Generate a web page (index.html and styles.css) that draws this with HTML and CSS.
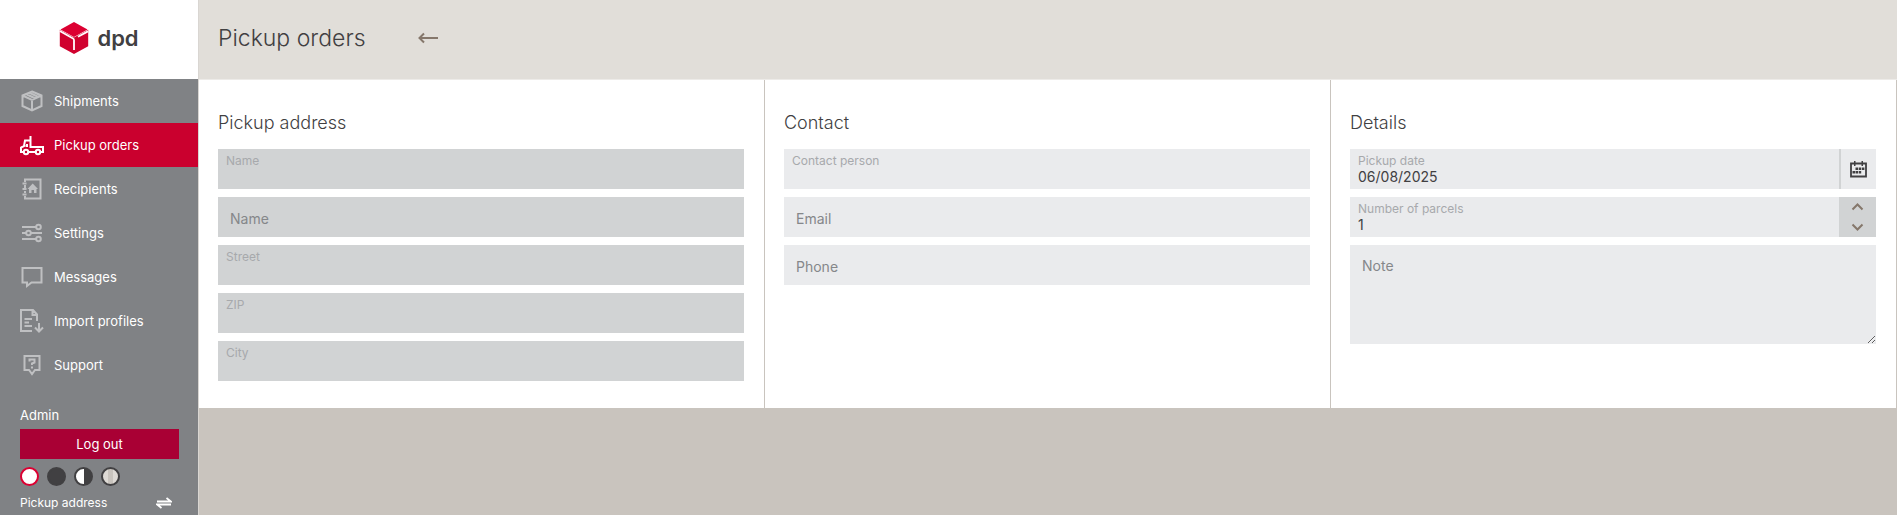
FILE: index.html
```
<!DOCTYPE html>
<html lang="en">
<head>
  <meta charset="UTF-8">
  <meta name="viewport" content="width=device-width, initial-scale=1.0">
  <title>Pickup orders</title>
  <link rel="stylesheet" href="styles.css">
</head>
<body>
  <div class="app">
    <!-- Sidebar -->
    <aside class="sidebar">
      <a href="#" class="logo" aria-label="dpd">
        <svg width="30" height="34" viewBox="0 0 30 34" aria-hidden="true">
          <path d="M15 1 28.500 8.500 15 16 1.500 8.500Z" fill="#dc0032"/>
          <path d="M.8 8.800 15 16.500 29.200 8.800V25.300L15 33 .8 25.300Z" fill="#d0022f"/>
          <path d="M.8 10 14 17.500Q15 18 15 19.200V29M29 10.400 19 15.800" fill="none" stroke="#fff" stroke-width="1.8"/>
        </svg>
        <span class="logo-text">dpd</span>
      </a>

      <nav class="menu" aria-label="Main menu">
        <a href="#" class="menu-item">
          <svg class="menu-icon" viewBox="0 0 24 24" aria-hidden="true"><path d="M12 2.500 21.500 6.500V17L12 21.500 2.500 17V6.500ZM2.500 6.500 12 11l9.500-4.500M12 11v10.500M6 5l9.500 4.500M9 3.700l9.500 4.300"/></svg>
          Shipments
        </a>
        <a href="#" class="menu-item active" aria-current="page">
          <svg class="menu-icon" viewBox="0 0 24 24" aria-hidden="true"><path d="M3.500 19H1V14.500L4 13l1-5.500H10M10.500 3V14H23V19H21M8.500 19H15.500M5.500 13H7V11"/><circle cx="6" cy="19" r="2.200"/><circle cx="18" cy="19" r="2.200"/></svg>
          Pickup orders
        </a>
        <a href="#" class="menu-item">
          <svg class="menu-icon" viewBox="0 0 24 24" aria-hidden="true"><path d="M5 5V2.500H20.500V21.500H5V19M5 8v3M5 14v2M2.500 6.500H6.500M2.500 12H6.500M2.500 17.500H6.500"/><path class="solid" d="M12.700 6.500 18 12h-1.500v4H14v-3h-2.500v3H9v-4H7.500Z"/></svg>
          Recipients
        </a>
        <a href="#" class="menu-item">
          <svg class="menu-icon" viewBox="0 0 24 24" aria-hidden="true"><path d="M2 6h14M2 12h4M11 12h11M2 18h14"/><circle cx="18.500" cy="6" r="2.300"/><circle cx="8.500" cy="12" r="2.300"/><circle cx="18.500" cy="18" r="2.300"/></svg>
          Settings
        </a>
        <a href="#" class="menu-item">
          <svg class="menu-icon" viewBox="0 0 24 24" aria-hidden="true"><path d="M2.500 3h19v14.500H11.500L7 21v-3.500H2.500Z"/></svg>
          Messages
        </a>
        <a href="#" class="menu-item">
          <svg class="menu-icon" viewBox="0 0 24 24" aria-hidden="true"><path d="M12 22H1V1h12l4 4.500V12M12.500 1v5H17M4.500 10H12M4.500 13.500H9M4.500 17H12M19 14v8M15 18.500l4 4 4-4"/></svg>
          Import profiles
        </a>
        <a href="#" class="menu-item">
          <svg class="menu-icon" viewBox="0 0 24 24" aria-hidden="true"><path d="M4.500 3h15v14H15l-3 4-3-4H4.500ZM9.500 8.500V6.500h5v3L12 10.500v1.500M12 13.500v2"/></svg>
          Support
        </a>
      </nav>

      <div class="account">
        <div class="user-name">Admin</div>
        <button type="button" class="logout">Log out</button>
        <div class="themes" role="group" aria-label="Theme">
          <button type="button" class="theme light" aria-label="Light"></button>
          <button type="button" class="theme dark" aria-label="Dark"></button>
          <button type="button" class="theme contrast" aria-label="High contrast"></button>
          <button type="button" class="theme sand" aria-label="Sand"></button>
        </div>
        <a href="#" class="address-switch">
          Pickup address
          <svg width="16" height="12" viewBox="0 0 16 12" aria-hidden="true"><path d="M1 4.500H15L10.500 1M15 7.500H1L5.500 11"/></svg>
        </a>
      </div>
    </aside>

    <!-- Content -->
    <main class="content">
      <header class="page-header">
        <h1>Pickup orders</h1>
        <a href="#" class="back" aria-label="Back">
          <svg width="20" height="12" viewBox="0 0 20 12" aria-hidden="true"><path d="M20 6H1.500M6 1.500 1.500 6 6 10.500"/></svg>
        </a>
      </header>

      <form class="panels">
        <section class="panel">
          <h2>Pickup address</h2>
          <div class="field disabled">
            <label for="name">Name</label>
            <input type="text" id="name" disabled>
          </div>
          <div class="field disabled plain">
            <input type="text" placeholder="Name" aria-label="Name" disabled>
          </div>
          <div class="field disabled">
            <label for="street">Street</label>
            <input type="text" id="street" disabled>
          </div>
          <div class="field disabled">
            <label for="zip">ZIP</label>
            <input type="text" id="zip" disabled>
          </div>
          <div class="field disabled">
            <label for="city">City</label>
            <input type="text" id="city" disabled>
          </div>
        </section>

        <section class="panel">
          <h2>Contact</h2>
          <div class="field">
            <label for="person">Contact person</label>
            <input type="text" id="person">
          </div>
          <div class="field plain">
            <input type="email" placeholder="Email" aria-label="Email">
          </div>
          <div class="field plain">
            <input type="tel" placeholder="Phone" aria-label="Phone">
          </div>
        </section>

        <section class="panel">
          <h2>Details</h2>
          <div class="field-row">
            <div class="field">
              <label for="date">Pickup date</label>
              <input type="text" id="date" value="06/08/2025">
            </div>
            <button type="button" class="calendar" aria-label="Choose date">
              <svg width="17" height="17" viewBox="0 0 17 17" aria-hidden="true"><path d="M1 2.500H16V15.500H1Z" fill="none" stroke="#414042" stroke-width="1.8"/><path d="M4 0h1.500v5H4ZM11.500 0H13v5h-1.500ZM5.500 6.500h2.500v2.500H5.500ZM8.700 6.500h2.500v2.500H8.700ZM11.900 6.500h2.500v2.500h-2.500ZM2.500 10H5v2.500H2.500ZM5.500 10h2.500v2.500H5.500ZM8.700 10h2.500v2.500H8.700Z" fill="#414042"/></svg>
            </button>
          </div>
          <div class="field-row">
            <div class="field">
              <label for="parcels">Number of parcels</label>
              <input type="text" id="parcels" inputmode="numeric" value="1">
            </div>
            <div class="stepper">
              <button type="button" aria-label="More">
                <svg width="13" height="8" viewBox="0 0 13 8" aria-hidden="true"><path d="M1.500 6.500l5-5 5 5"/></svg>
              </button>
              <button type="button" aria-label="Fewer">
                <svg width="13" height="8" viewBox="0 0 13 8" aria-hidden="true"><path d="M1.500 1.500l5 5 5-5"/></svg>
              </button>
            </div>
          </div>
          <textarea class="note" placeholder="Note" aria-label="Note"></textarea>
        </section>
      </form>
    </main>
  </div>
</body>
</html>
```
FILE: styles.css
```
/* Basic Reset */
* {
  margin: 0;
  padding: 0;
  box-sizing: border-box;
}

body {
  background-color: #fff;
  color: #414042;
  font-family: Inter, "Open Sans", sans-serif;
  font-size: 13px;
  line-height: 16px;
}

a {
  color: inherit;
  text-decoration: none;
}

button,
input,
textarea {
  border: none;
  color: inherit;
  font: inherit;
}

svg {
  display: block;
  flex: none;
}

.app {
  display: grid;
  grid-template-columns: 198px 1fr;
  min-height: calc(100vh - 1px);
  background-color: #c9c4be;
}

/* Sidebar */
.sidebar {
  display: flex;
  flex-direction: column;
  background-color: #808285;
  color: #fff;
}

.logo {
  display: flex;
  align-items: center;
  justify-content: center;
  gap: 8px;
  height: 79px;
  padding-bottom: 3px;
  background-color: #fff;
}

.logo-text {
  color: #414042;
  font-size: 22px;
  font-weight: 600;
  line-height: 28px;
}

.menu-item {
  display: flex;
  align-items: center;
  gap: 10px;
  height: 44px;
  padding-left: 20px;
}

.menu-item.active {
  background-color: #ca002e;
}

.menu-icon {
  width: 24px;
  height: 24px;
  overflow: visible;
  fill: none;
  stroke: #bfc0c2;
  stroke-width: 2;
}

.menu-icon .solid {
  fill: #bfc0c2;
  stroke: none;
}

.active .menu-icon {
  stroke: #fff;
}

.account {
  padding: 20px 19px 4px 20px;
}

.user-name {
  margin-bottom: 6px;
}

.logout {
  display: block;
  width: 100%;
  height: 30px;
  background-color: #a90034;
  cursor: pointer;
}

.themes {
  display: flex;
  gap: 8px;
  margin: 8px 0 9px;
}

.theme {
  width: 19px;
  height: 19px;
  border: 2px solid #414042;
  border-radius: 50%;
  cursor: pointer;
}

.theme.light {
  background-color: #fff;
  border-color: #dc0032;
}

.theme.dark {
  background-color: #414042;
}

.theme.contrast {
  background: linear-gradient(to right, #fff 50%, #414042 50%);
}

.theme.sand {
  background: linear-gradient(to right, #dedad5 33%, #c9c4be 33%, #c9c4be 66%, #dedad5 66%);
}

.address-switch {
  display: flex;
  align-items: center;
  justify-content: space-between;
  padding-right: 7px;
  font-size: 12px;
}

.address-switch svg {
  fill: none;
  stroke: #fff;
  stroke-width: 1.8;
}

/* Content */
.content {
  border-left: 1px solid #d9d6d2;
}

.page-header {
  display: flex;
  align-items: center;
  gap: 52px;
  height: 80px;
  padding: 0 19px 4px;
  background-color: #e1ded9;
  border-bottom: 1px solid #edebe8;
}

h1 {
  font-size: 23px;
  font-weight: 300;
  line-height: 28px;
}

.back svg {
  fill: none;
  stroke: #85776b;
  stroke-width: 2;
}

/* Form Panels */
.panels {
  display: grid;
  grid-template-columns: repeat(3, 1fr);
  background-color: #fff;
}

.panel {
  display: flex;
  flex-direction: column;
  gap: 8px;
  padding: 32px 20px 27px 19px;
  border-right: 1px solid #c9c4be;
}

h2 {
  margin-bottom: 7px;
  font-size: 18px;
  font-weight: 300;
  line-height: 22px;
}

.field {
  flex: 1;
  display: flex;
  flex-direction: column;
  height: 40px;
  padding: 4px 8px;
  background-color: #eaebed;
}

.panel > .field {
  flex: none;
}

.field.disabled {
  background-color: #d1d3d4;
}

.field label {
  color: #a7a9ac;
  font-size: 12px;
  line-height: 15px;
}

.field input {
  width: 100%;
  height: 17px;
  background: none;
  outline: none;
  font-size: 14px;
}

.field.plain {
  padding: 13px 12px 10px;
}

::placeholder {
  color: #85878a;
  opacity: 1;
}

.field-row {
  display: flex;
}

.calendar,
.stepper {
  width: 37px;
  height: 40px;
}

.calendar {
  display: flex;
  align-items: center;
  justify-content: center;
  background-color: #eaebed;
  border-left: 2px solid #d1d3d4;
  cursor: pointer;
}

.stepper {
  display: flex;
  flex-direction: column;
  background-color: #d1d3d4;
}

.stepper button {
  display: flex;
  flex: 1;
  align-items: center;
  justify-content: center;
  background: none;
  cursor: pointer;
}

.stepper svg {
  fill: none;
  stroke: #85776b;
  stroke-width: 2;
}

.note {
  display: block;
  width: 100%;
  height: 99px;
  padding: 13px 12px;
  background-color: #eaebed;
  outline: none;
  font-size: 14px;
  resize: vertical;
}
```
